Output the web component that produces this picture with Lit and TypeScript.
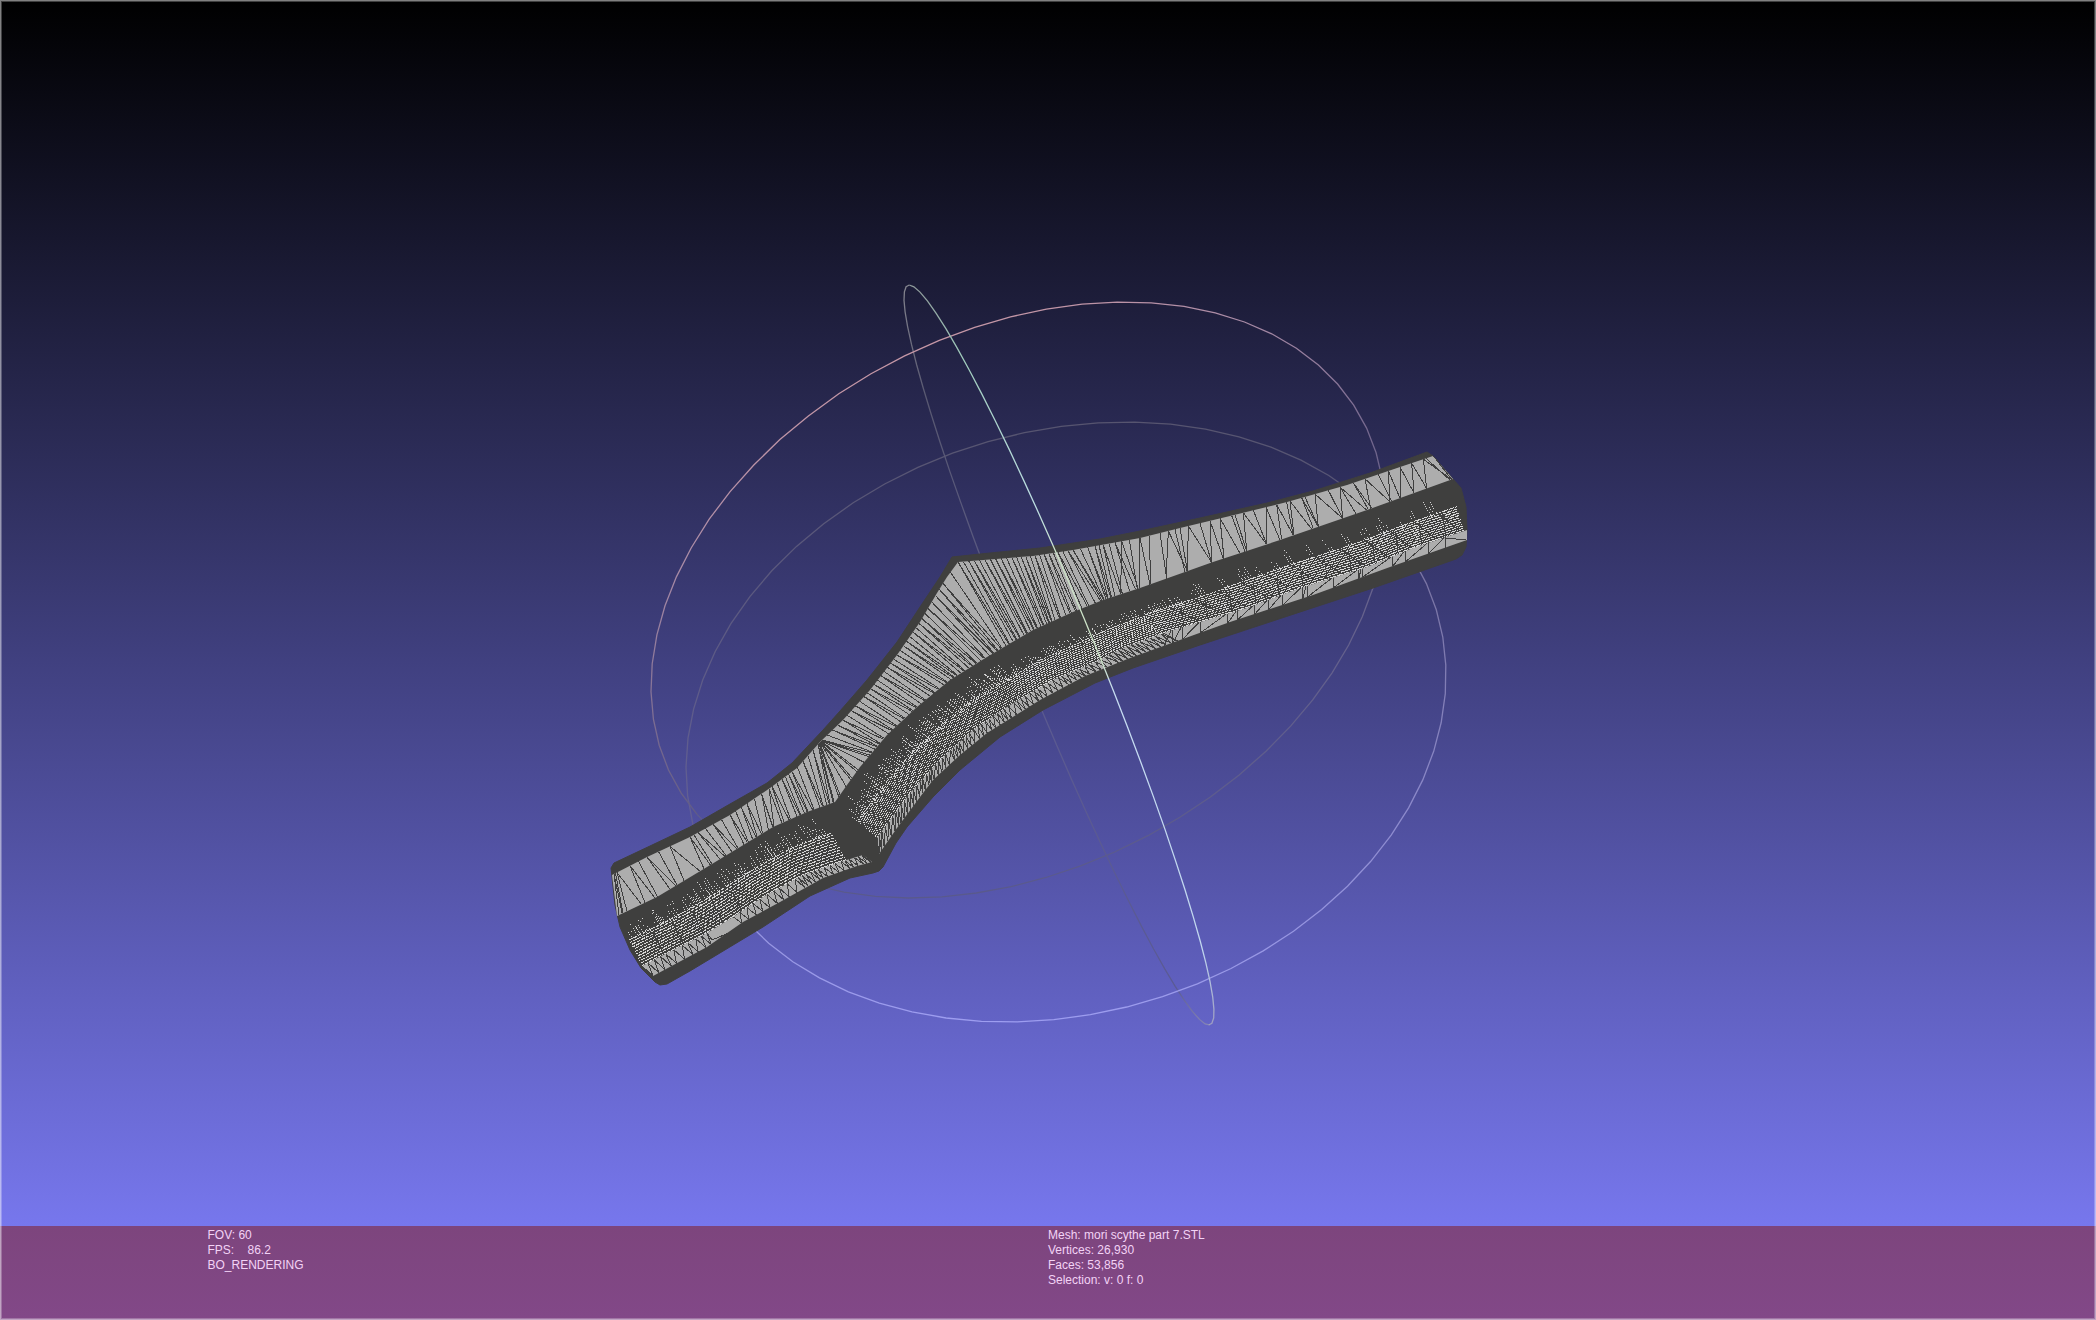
import { LitElement, html, svg, css } from "lit";
import { customElement, state } from "lit/decorators.js";

type Pt = [number, number];

const pts = (s: string): Pt[] => s.trim().split(/\s+/).map((p) => p.split(",").map(Number) as Pt);
const line = (p: Pt[]) => "M" + p.map(([x, y]) => `${x} ${y}`).join("L");

/* Repeatable noise, so the mesh looks the same on every load. */
function noise(seed: number) {
  let a = seed;
  return () => {
    a = (a * 1664525 + 1013904223) >>> 0;
    return a / 4294967296;
  };
}

/* y of a left-to-right curve at x */
function on(curve: Pt[], x: number): Pt {
  for (let i = 1; i < curve.length; i++) {
    if (x <= curve[i][0] || i === curve.length - 1) {
      const [a, b] = [curve[i - 1], curve[i]];
      return [x, a[1] + ((b[1] - a[1]) * (x - a[0])) / (b[0] - a[0])];
    }
  }
  return curve[0];
}

/* point at a share s (0..1) of the curve's length */
function along(curve: Pt[]) {
  const sum = [0];
  for (let i = 1; i < curve.length; i++)
    sum.push(sum[i - 1] + Math.hypot(curve[i][0] - curve[i - 1][0], curve[i][1] - curve[i - 1][1]));
  const total = sum[sum.length - 1];
  return (s: number): Pt => {
    const d = s * total;
    let i = 1;
    while (i < curve.length - 1 && sum[i] < d) i++;
    const k = (d - sum[i - 1]) / (sum[i] - sum[i - 1]);
    return [
      curve[i - 1][0] + (curve[i][0] - curve[i - 1][0]) * k,
      curve[i - 1][1] + (curve[i][1] - curve[i - 1][1]) * k,
    ];
  };
}

/* Outline of the part */
const BODY = pts(`611,868 614,863 650,846 690,827 730,804 767,783 792,763 823,730 840,711 867,680 897,642 920,607 940,577 952,557 980,554 1040,548
  1100,539 1140,531 1200,518 1267,503 1313,491 1370,473 1427,452 1433,456 1453,479 1461,488 1466,507 1467,530 1466,547 1462,555 1456,559 1373,588 1300,612 1200,645 1133,668
  1095,683 1043,710 1000,737 960,770 933,797 907,827 896,843 883,867 879,871 873,873 850,878 810,896 763,927 690,971 667,984 660,985 655,982 641,968 630,950 620,927 615,905 612,877`);

/* Edges of the lit strips, from the top one down */
const TOP = pts(`612,875 647,857 690,837 730,815 770,788 797,768 820,742 843,720 870,690 897,655 920,622 937,593 947,577 958,562 1033,556 1073,550
  1140,538 1180,528 1230,516 1287,502 1347,485 1400,467 1433,456`);
const MID = pts(`617,916 657,897 707,867 740,847 773,827 807,812 835,802 847,785 860,767 887,735 917,707 950,680 987,657 1033,630 1073,612 1103,600 1140,588
  1213,562 1280,540 1367,510 1453,479`);
const LOW_L = pts(`642,966 673,950 707,933 733,917 763,897 803,875 837,863 863,855`);
const LOW_R = pts(`877,838 890,820 910,793 940,760 973,730 1007,707 1053,680 1093,663 1123,648 1163,633 1247,608 1300,588 1367,567 1413,548 1467,530`);
const END_L = pts(`653,976 707,947 743,922 780,902 823,878 857,866 872,862`);
const END_R = pts(`879,854 897,828 920,797 933,780 960,755 987,733 1040,700 1085,676 1130,658 1180,640 1230,622 1313,595 1390,567 1467,540`);
const MID_L = MID.slice(0, 7);
const MID_R = MID.slice(6);

/* x on TOP, x on MID, number of facets up to the next row */
const FAN: [number, number, number][] = [
  [614, 619, 2], [617, 627, 1], [630, 645, 2], [647, 670, 2], [670, 684, 1], [690, 704, 2], [698, 720, 2], [713, 732, 2],
  [730, 744, 3], [747, 757, 3], [769, 774, 1], [772, 784, 2], [782, 797, 3], [792, 808, 2], [803, 820, 3], [818, 830, 1],
  [819, 834, 6], [822, 870, 4], [843, 880, 5], [864, 901, 5], [881, 921, 5], [897, 944, 5], [913, 961, 5], [928, 981, 4],
  [943, 998, 2], [958, 1006, 5], [985, 1024, 5], [1012, 1041, 5], [1035, 1055, 5], [1058, 1082, 3], [1073, 1102, 3],
  [1095, 1108, 2], [1103, 1115, 3], [1121, 1137, 1],
];
/* Single edges of the far end, where the facets are wide */
const FAR: [number, number][] = [
  [65, 115], [65, 62], [88, 112], [120, 150], [120, 118], [148, 152], [180, 200], [205, 262], [205, 198], [225, 255], [240, 262],
  [265, 262], [265, 335], [300, 335], [330, 335], [330, 370], [360, 372], [360, 420], [395, 435], [405, 440], [430, 440],
  [430, 500], [460, 500], [498, 500], [498, 540], [530, 545], [530, 580], [560, 580], [570, 582], [570, 635], [605, 640],
  [605, 655], [615, 655], [645, 655], [645, 728], [685, 728], [720, 728], [720, 768], [720, 800], [760, 805], [760, 815],
  [795, 812], [795, 870], [835, 875], [865, 870], [865, 900], [900, 900], [900, 942], [935, 942], [935, 980], [970, 980],
  [970, 1055], [978, 1050], [1000, 1055],
];

function fanEdges() {
  let d = "";
  const edge = (u: number, l: number) => {
    d += line([on(TOP, u), on(MID, l)]);
  };
  for (let i = 0; i < FAN.length - 1; i++) {
    const [u0, l0, n] = FAN[i];
    const [u1, l1] = FAN[i + 1];
    for (let k = 0; k < n; k++) {
      const u = u0 + ((u1 - u0) * k) / n;
      edge(u, l0 + ((l1 - l0) * k) / n);
      if (k % 3 !== 1) edge(u, l0 + ((l1 - l0) * (k + 0.8)) / n);
    }
  }
  for (const [u, l] of FAR) edge(1100 + u / 3, 1100 + l / 3);
  return d;
}

/* Zigzag between the two edges of the lower strip */
function stripEdges() {
  const r = noise(11);
  let d = "";
  const zig = (a: Pt[], b: Pt[], step: (s: number) => number, gap: (s: number) => boolean) => {
    const [fa, fb] = [along(a), along(b)];
    let s = 0;
    while (s < 1) {
      const n = Math.min(1, s + step(s) * (0.7 + r() * 0.6));
      if (!gap(s)) d += line([fa(s), fb(s), fa(n)]);
      s = n;
    }
  };
  zig(LOW_L, END_L, (s) => (s > 0.7 ? 0.02 : 0.032), (s) => s > 0.28 && s < 0.4);
  zig(LOW_R.slice(0, 10), END_R.slice(0, 10), () => 0.014, () => false);
  d += line([[707, 933], [712, 940], [743, 927]]);
  let last = 1163;
  for (const x of [1172, 1182, 1200, 1227, 1237, 1254, 1268, 1282, 1302, 1307, 1333, 1358, 1362, 1392, 1405, 1428, 1445]) {
    d += line([on(LOW_R, x), on(END_R, x)]) + line([on(END_R, last + 1), on(LOW_R, x - 1)]);
    last = x;
  }
  return d + line([[1445, 538], [1466, 540]]);
}

/* Rows of glints where wires are almost as dense as pixels */
function glints() {
  const r = noise(5);
  const rows: { d: string; dash: string; shift: number }[] = [];
  const put = (a: Pt[], b: Pt[], s0: number, s1: number, count: number, dash: string, shift: number, from: number) => {
    const [fa, fb] = [along(a), along(b)];
    for (let i = 0; i < count; i++) {
      const t = from + ((0.99 - from) * i) / (count - 1);
      const p: Pt[] = [];
      for (let k = 0; k <= 40; k++) {
        const s = s0 + ((s1 - s0) * k) / 40;
        const [x0, y0] = fa(s);
        const [x1, y1] = fb(s);
        p.push([+(x0 + (x1 - x0) * t).toFixed(1), +(y0 + (y1 - y0) * t).toFixed(1)]);
      }
      rows.push({ d: line(p), dash, shift: i * shift });
    }
  };
  put(MID_L, LOW_L, 0, 0.93, 12, "4 1", 2, 0.48);
  put(MID_R, LOW_R, 0, 0.3, 14, "1 1", 1, 0.54);
  put(MID_R, LOW_R, 0.3, 0.52, 13, "2 1", 1, 0.56);
  put(MID_R, LOW_R, 0.52, 0.64, 12, "3 1", 2, 0.54);
  put(MID_R, LOW_R, 0.64, 0.995, 12, "6 1", 3, 0.52);

  let dots = "";
  const spray = (a: Pt[], b: Pt[], s0: number, s1: number, streaks: number, tilt: number, reach: number, low: number) => {
    const [fa, fb] = [along(a), along(b)];
    for (let i = 0; i < streaks; i++) {
      const s = s0 + ((s1 - s0) * (i + r() * 0.6)) / streaks;
      const strands = 2 + Math.floor(r() * 3);
      for (let j = 0; j < strands; j++) {
        const up = low - reach * (0.3 + r() * 0.7);
        for (let t = low; t > up; t -= 0.04) {
          if (r() < 0.25) continue;
          const [x0, y0] = fa(s);
          const [x1, y1] = fb(s);
          const x = Math.round(x0 + (x1 - x0) * t + j * 3 + (t - low) * tilt);
          const y = Math.round(y0 + (y1 - y0) * t - j);
          dots += `M${x} ${y}h1v1h-1z`;
        }
      }
    }
  };
  spray(MID_L, LOW_L, 0.01, 0.9, 27, 10, 0.36, 0.48);
  spray(MID_R, LOW_R, 0, 0.3, 46, 10, 0.38, 0.54);
  spray(MID_R, LOW_R, 0.3, 0.6, 30, 10, 0.2, 0.54);
  spray(MID_R, LOW_R, 0.6, 0.98, 14, 14, 0.32, 0.52);
  return { rows, dots };
}

/* Wires that cross the glint rows */
function crossings() {
  let d = "";
  const [fa, fb] = [along(MID_R), along(LOW_R)];
  for (let s = 0.56; s < 1; s += 0.037) {
    const [x0, y0] = fa(s);
    const [x1, y1] = fb(s);
    d += line([[x1 - 3, y0 + (y1 - y0) * 0.5 + 2], [x1, y1]]) + line([[x0 + 6, y0 + (y1 - y0) * 0.5], [x1 + 14, y1 - 6]]);
  }
  const [ga, gb] = [along(MID_L), along(LOW_L)];
  for (let s = 0.1; s < 0.5; s += 0.09) {
    const [x0, y0] = ga(s);
    const [x1, y1] = gb(s);
    d += line([[x0 + (x1 - x0) * 0.55, y0 + (y1 - y0) * 0.55], [x1, y1]]);
  }
  return d;
}

/* Trackball rings: centre, half extents, and skew in degrees */
interface Ring { cx: number; cy: number; rx: number; ry: number; skew: number }
const RING_X: Ring = { cx: 1018, cy: 600, rx: 367, ry: 298, skew: -17 };
const RING_Y: Ring = { cx: 1059, cy: 655, rx: 155, ry: 370, skew: 75 };
const RING_Z: Ring = { cx: 1066, cy: 722, rx: 380, ry: 300, skew: -9 };

function arc({ cx, cy, rx, ry, skew }: Ring, from: number, to: number, sides = 64) {
  const n = Math.ceil(((to - from) / 360) * sides);
  const rad = Math.PI / 180;
  const p: Pt[] = [];
  for (let i = 0; i <= n; i++) {
    const t = from + ((to - from) * i) / n;
    p.push([+(cx + rx * Math.cos(t * rad)).toFixed(1), +(cy + ry * Math.sin((t + skew) * rad)).toFixed(1)]);
  }
  return line(p);
}

@customElement("mesh-view")
export class MeshView extends LitElement {
  static styles = css`
    :host { display: block; }
    .drawing { display: block; width: 100%; height: 100%; }
    .ring { fill: none; stroke-width: 1.3; }
    .hull { fill: #3f3f3e; stroke: #3f3f3e; stroke-width: 1; stroke-linejoin: round; }
    .lit { fill: #adadad; }
    .wire { fill: none; stroke: #3f3f3f; stroke-width: 1; shape-rendering: crispEdges; }
    .glint { fill: none; stroke: #d8d8d8; stroke-width: 1; shape-rendering: crispEdges; }
    .dots { fill: #d0d0d0; shape-rendering: crispEdges; }
  `;

  render() {
    const { rows, dots } = glints();
    const band = (a: Pt[], b: Pt[]) => line([...a, ...[...b].reverse()]) + "Z";
    return html`
      <svg class="drawing" viewBox="0 0 2096 1320" preserveAspectRatio="xMidYMid slice" role="img" aria-label="Mesh with trackball">
        <defs>
          <linearGradient id="x" gradientUnits="userSpaceOnUse" x1="960" y1="300" x2="1110" y2="640">
            <stop offset="0" stop-color="#cd9aa6" />
            <stop offset="0.35" stop-color="#a98ba6" />
            <stop offset="0.75" stop-color="#77698f" />
            <stop offset="1" stop-color="#5f5b84" />
          </linearGradient>
          <linearGradient id="xb" gradientUnits="userSpaceOnUse" x1="0" y1="560" x2="0" y2="900">
            <stop offset="0" stop-color="#68638c" />
            <stop offset="1" stop-color="#59598c" />
          </linearGradient>
          <linearGradient id="zb" gradientUnits="userSpaceOnUse" x1="0" y1="420" x2="0" y2="940">
            <stop offset="0" stop-color="#56546f" />
            <stop offset="1" stop-color="#6663a0" />
          </linearGradient>
          <linearGradient id="zf" gradientUnits="userSpaceOnUse" x1="0" y1="540" x2="0" y2="1023">
            <stop offset="0" stop-color="#76709c" />
            <stop offset="1" stop-color="#9d9df0" />
          </linearGradient>
          <linearGradient id="yb" gradientUnits="userSpaceOnUse" x1="0" y1="285" x2="0" y2="1025">
            <stop offset="0" stop-color="#85858f" />
            <stop offset="0.15" stop-color="#585870" />
            <stop offset="0.6" stop-color="#5b5a90" />
            <stop offset="0.95" stop-color="#5a5a94" />
            <stop offset="1" stop-color="#8484b4" />
          </linearGradient>
          <linearGradient id="yf" gradientUnits="userSpaceOnUse" x1="0" y1="285" x2="0" y2="1025">
            <stop offset="0" stop-color="#8d9899" />
            <stop offset="0.1" stop-color="#a0ccbc" />
            <stop offset="0.3" stop-color="#bcdde2" />
            <stop offset="0.37" stop-color="#cde3c8" />
            <stop offset="0.51" stop-color="#cde3c8" />
            <stop offset="0.55" stop-color="#c6dcf2" />
            <stop offset="0.9" stop-color="#c0d6ee" />
            <stop offset="1" stop-color="#9c9cc0" />
          </linearGradient>
        </defs>
        <path class="ring" stroke="url(#zb)" d=${arc(RING_Z, 147, 336)} />
        <path class="ring" stroke="url(#yb)" d=${arc(RING_Y, 14, 195)} />
        <path class="ring" stroke="url(#xb)" d=${arc(RING_X, -7, 151)} />
        <path class="ring" stroke="url(#x)" d=${arc(RING_X, 151, 353)} />
        <path class="ring" stroke="url(#zf)" d=${arc(RING_Z, -24, 147)} />
        <path class="hull" d=${line(BODY) + "Z"} />
        <path class="lit" d=${band(TOP, MID)} />
        <path class="lit" d=${band(LOW_L, END_L)} />
        <path class="lit" d=${band(LOW_R, END_R)} />
        ${rows.map((g) => svg`<path class="glint" stroke-dasharray=${g.dash} stroke-dashoffset=${g.shift} d=${g.d} />`)}
        <path class="dots" d=${dots} />
        <path class="wire" d=${crossings()} />
        <path class="wire" d=${fanEdges()} />
        <path class="wire" d=${stripEdges()} />
        <path class="ring" stroke="url(#yf)" d=${arc(RING_Y, -165, 15)} />
      </svg>
    `;
  }
}

@customElement("app-root")
export class AppRoot extends LitElement {
  static styles = css`
    :host { display: block; }
    .viewport {
      position: relative;
      display: flex;
      flex-direction: column;
      justify-content: flex-end;
      min-height: 100vh;
      overflow: hidden;
      background: linear-gradient(#000000, #8080ff);
    }
    .canvas { position: absolute; inset: 0; }
    .frame {
      position: absolute;
      inset: 0;
      border: 1px solid rgba(255, 255, 255, 0.5);
      box-shadow: inset 0 0 0 1px rgba(255, 255, 255, 0.25);
      pointer-events: none;
    }
    .info {
      position: relative;
      display: grid;
      grid-template-columns: 99fr 401fr 500fr;
      min-height: 94px;
      box-sizing: border-box;
      padding-top: 2px;
      background: linear-gradient(#7d457d, #824888);
      color: #f3d3f6;
      font: 12px/15px "Liberation Sans", Arial, sans-serif;
    }
    .column { margin: 0; padding: 0; list-style: none; white-space: pre; }
    .first { grid-column: 2; }
  `;

  @state() private view = ["FOV: 60", "FPS:    86.2", "BO_RENDERING"];
  @state() private mesh = ["Mesh: mori scythe part 7.STL", "Vertices: 26,930", "Faces: 53,856", "Selection: v: 0 f: 0"];

  render() {
    return html`
      <main class="viewport">
        <mesh-view class="canvas"></mesh-view>
        <section class="info" aria-label="Scene information">
          <ul class="column first">${this.view.map((t) => html`<li>${t}</li>`)}</ul>
          <ul class="column">${this.mesh.map((t) => html`<li>${t}</li>`)}</ul>
        </section>
        <div class="frame"></div>
      </main>
    `;
  }
}
